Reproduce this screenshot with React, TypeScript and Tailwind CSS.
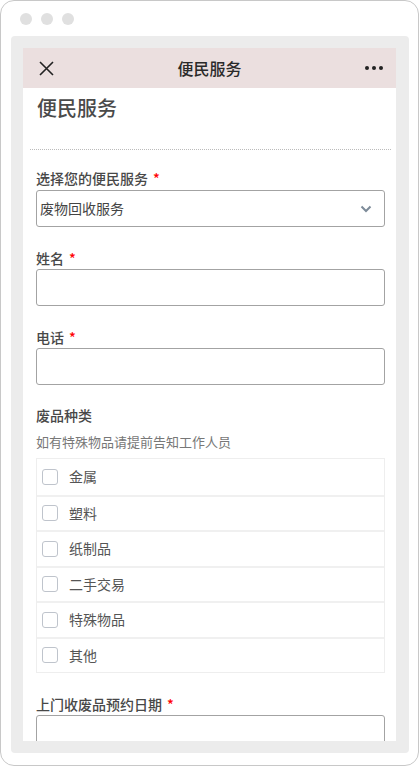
const FONT = { fontFamily: '"Noto Sans CJK SC", "Noto Sans", sans-serif' };

const WASTE = ["金属", "塑料", "纸制品", "二手交易", "特殊物品", "其他"];

function Label({ text, required }: { text: string; required?: boolean }) {
  return (
    <div className="h-5 leading-5 text-[14px] font-medium text-[#484848]">
      {text}
      {required && <span className="ml-[5px] text-[#f00]">*</span>}
    </div>
  );
}

function Field({ label }: { label: string }) {
  return (
    <div className="pt-[21px]">
      <Label text={label} required />
      <div className="mt-px h-[37px] rounded-[3px] border border-[#a3a3a3] bg-white" />
    </div>
  );
}

export default function App() {
  return (
    <div style={FONT} className="w-[419px] h-[766px] bg-white">
      <div className="flex h-full flex-col rounded-[14px] border border-[#c8c8c8] pl-[10px] pr-[9px]">
        <div className="flex gap-[9px] pl-[9px] pt-[12px]">
          <span className="h-3 w-3 rounded-full bg-[#e0e0e0]" />
          <span className="h-3 w-3 rounded-full bg-[#e0e0e0]" />
          <span className="h-3 w-3 rounded-full bg-[#e0e0e0]" />
        </div>

        <div className="mt-[11px] h-[717px] rounded-[4px] bg-[#ececec] pl-[12px] pr-[13px] py-[12px]">
          <div className="h-[693px] overflow-hidden bg-white">
            <div className="flex h-10 items-center justify-between bg-[#ebdfdf] pl-[16px] pr-[13px]">
              <svg width="15" height="15" viewBox="0 0 15 15" fill="none" stroke="#222" strokeWidth="1.6">
                <path d="M1 1l13 13M14 1L1 14" />
              </svg>
              <span className="text-[16px] font-medium text-[#2a2a2a]">便民服务</span>
              <div className="flex gap-[3px]">
                <span className="h-[4px] w-[4px] rounded-full bg-[#222]" />
                <span className="h-[4px] w-[4px] rounded-full bg-[#222]" />
                <span className="h-[4px] w-[4px] rounded-full bg-[#222]" />
              </div>
            </div>

            <div className="ml-[7px] mr-[5px] border-b border-dotted border-[#bbb] pb-[27px] pt-[6px]">
              <h1 className="pl-[7px] text-[20px] leading-7 font-medium text-[#4a4a4a]">便民服务</h1>
            </div>

            <div className="pl-[13px] pr-[11px]">
              <div className="pt-[18px]">
                <Label text="选择您的便民服务" required />
                <div className="mt-[2px] flex h-[37px] items-center justify-between rounded-[3px] border border-[#a3a3a3] pl-[3px] pr-[12px]">
                  <span className="text-[14px] text-[#444]">废物回收服务</span>
                  <svg width="12" height="8" viewBox="0 0 12 8" fill="none" stroke="#7d8b99" strokeWidth="2">
                    <path d="M1.5 1.5l4.5 4.5 4.5-4.5" />
                  </svg>
                </div>
              </div>

              <Field label="姓名" />
              <Field label="电话" />

              <div className="pt-[20px]">
                <Label text="废品种类" />
                <div className="mt-[7px] h-5 leading-5 text-[13px] text-[#777]">如有特殊物品请提前告知工作人员</div>
                <div className="mt-[6px] border border-[#eeeeee]">
                  {WASTE.map((w, i) => (
                    <div
                      key={w}
                      className={`flex h-[35.5px] items-center pl-[5px] ${i > 0 ? "border-t-2 border-[#f0f0f0]" : ""}`}
                    >
                      <span className="h-4 w-4 rounded-[3px] border border-[#bfc4cc] bg-white" />
                      <span className="ml-[11px] text-[14px] text-[#555]">{w}</span>
                    </div>
                  ))}
                </div>
              </div>

              <Field label="上门收废品预约日期" />
            </div>
          </div>
        </div>
      </div>
    </div>
  );
}
